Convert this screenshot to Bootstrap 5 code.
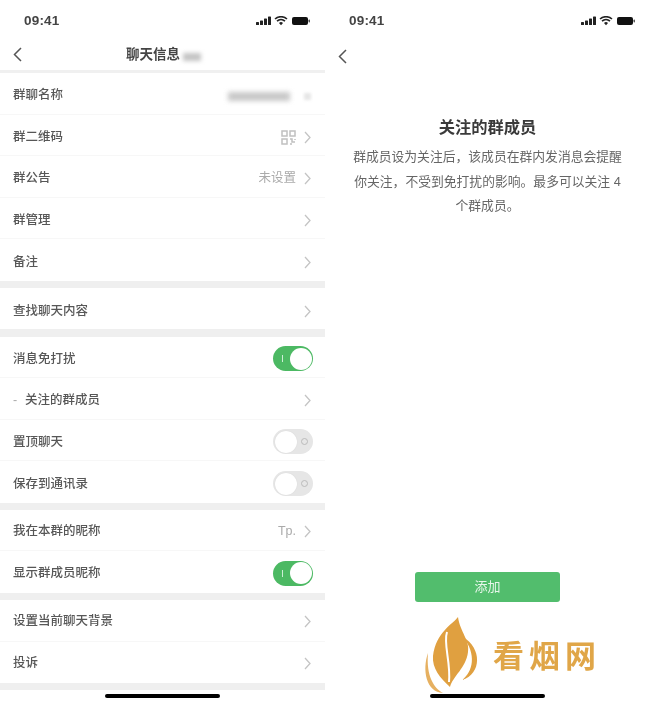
<!DOCTYPE html>
<html lang="zh-CN">
  <head>
    <meta charset="UTF-8" />
    <meta name="viewport" content="width=device-width, initial-scale=1" />
    <title>聊天信息</title>
    <link
      href="https://cdn.jsdelivr.net/npm/bootstrap@5.3.0/dist/css/bootstrap.min.css"
      rel="stylesheet"
    />
    <style>
      html, body { height: 704px; overflow: hidden; background: #fff; }
      body { font-family: "Liberation Sans", "Noto Sans CJK SC", sans-serif; color: #555; }
      .phones { width: 650px; height: 704px; filter: blur(0.7px); }
      .phone { width: 325px; height: 704px; }

      .status-row { height: 40px; padding: 13px 14px 0 24px; }
      .status-icons { margin-top: 3px; }
      .clock { font-size: 13.5px; font-weight: 700; color: #444; line-height: 16px; letter-spacing: 0.2px; }
      .top-row { height: 32px; padding: 0 13px; }
      .page-name { font-size: 13.5px; font-weight: 700; color: #444; margin-left: 103px; }
      .name-mask { width: 18px; height: 8px; margin: 4px 0 0 3px; background: #c4c4c4; filter: blur(2px); }
      .top-rule { height: 3px; background: #f0f0f0; }

      .info-list { font-size: 12.5px; font-weight: 500; border-radius: 0; }
      .info-item { height: 41.5px; padding: 4px 14px 0 13px; border-color: #f7f7f7; color: #575757; background: transparent; }
      .info-high .info-item { padding-top: 5px; }
      .info-low .info-item { padding-top: 2px; }
      .info-value { color: #aaa; margin-right: 8px; font-weight: 400; }
      .info-dash { color: #aaa; width: 12px; }
      .gap-band { height: 7.5px; background: #efefef; }
      .name-blur { width: 62px; height: 9px; background: #c8c8c8; filter: blur(2.5px); margin: 2px 14px 0 0; }
      .dot-blur { width: 7px; height: 7px; background: #e6e6e6; filter: blur(1.5px); margin-top: 2px; }

      .sw { width: 40px; height: 25px; border-radius: 13px; padding: 1.5px; margin-right: -2px; }
      .sw-on { background: #4cb963; }
      .sw-off { background: #e6e6e6; }
      .knob { width: 22px; height: 22px; border-radius: 50%; background: #fff; }
      .sw-off .knob { box-shadow: 0 0 1px #ccc; }
      .on-mark { width: 1px; height: 7px; background: #cdeed6; margin-left: 7px; }
      .off-mark { width: 7px; height: 7px; border: 1px solid #bbb; border-radius: 50%; margin-right: 4px; }

      .home-row { height: 14px; }
      .home-bar { width: 115px; height: 3.5px; border-radius: 2px; background: #000; margin-top: 4px; }

      .intro-title { font-size: 16.3px; font-weight: 700; color: #3a3a3a; margin: 43px 0 0; line-height: 24px; }
      .intro-text { font-size: 12.8px; line-height: 24.5px; color: #666; width: 272px; margin: 6px auto 0; }
      .add-btn { width: 145px; height: 30px; margin: 0 auto 88px; padding: 0; font-size: 13px; border-radius: 3px; background: #52bd6d; border: 0; color: #e6f6ea; }

      .mark-logo { left: 95px; top: 612px; }
      .mark-name { left: 168px; top: 637px; font-size: 31px; line-height: 40px; font-weight: 700; color: #e0a648; letter-spacing: 5px; }
    </style>
  </head>
  <body>
    <svg width="0" height="0" class="position-absolute">
      <defs>
        <g id="status-icons">
          <!-- signal -->
          <rect x="0" y="6" width="3" height="3" rx="0.6" fill="#222" />
          <rect x="4" y="4.5" width="3" height="4.5" rx="0.6" fill="#222" />
          <rect x="8" y="2.5" width="3" height="6.5" rx="0.6" fill="#222" />
          <rect x="12" y="0.5" width="3" height="8.5" rx="0.6" fill="#222" />
          <!-- wifi -->
          <path d="M19 3 a9 9 0 0 1 12 0 M21 5.2 a6 6 0 0 1 8 0" fill="none" stroke="#222" stroke-width="1.6" />
          <path d="M23 7 a3 3 0 0 1 4 0 L25 9.2 Z" fill="#222" />
          <!-- battery -->
          <rect x="36" y="1" width="16" height="8" rx="2" fill="#111" />
          <rect x="52.5" y="3.5" width="1.5" height="3" rx="0.7" fill="#555" />
        </g>
        <path id="chev-left" d="M8 1 L1.5 7.5 L8 14" fill="none" stroke="#555" stroke-width="1.5" />
        <path id="chev-right" d="M1 1 L6 6.5 L1 12" fill="none" stroke="#c4c4c4" stroke-width="1.3" />
      </defs>
    </svg>

    <div class="phones d-flex">
      <!-- Left: group info -->
      <div class="phone d-flex flex-column">
        <div class="status-row d-flex justify-content-between align-items-start">
          <span class="clock">09:41</span>
          <svg width="55" height="10" class="status-icons"><use href="#status-icons" /></svg>
        </div>
        <div class="top-row d-flex align-items-center">
          <svg width="10" height="15"><use href="#chev-left" /></svg>
          <span class="page-name">聊天信息</span>
          <span class="name-mask"></span>
        </div>
        <div class="top-rule"></div>

        <div class="list-group list-group-flush info-list info-high">
          <div class="list-group-item info-item d-flex align-items-center justify-content-between">
            <span>群聊名称</span>
            <span class="d-flex align-items-center"><span class="name-blur"></span><span class="dot-blur"></span></span>
          </div>
          <div class="list-group-item info-item d-flex align-items-center justify-content-between">
            <span>群二维码</span>
            <span class="d-flex align-items-center">
              <svg width="15" height="15" class="info-value">
                <g fill="none" stroke="#c0c0c0" stroke-width="1.5">
                  <rect x="1" y="1" width="5" height="5" />
                  <rect x="9" y="1" width="5" height="5" />
                  <rect x="1" y="9" width="5" height="5" />
                  <path d="M9 9 h2 v3 h3 M14 9 v1 M9 14 h2" />
                </g>
              </svg>
              <svg width="7" height="13"><use href="#chev-right" /></svg>
            </span>
          </div>
          <div class="list-group-item info-item d-flex align-items-center justify-content-between">
            <span>群公告</span>
            <span class="d-flex align-items-center"><span class="info-value">未设置</span><svg width="7" height="13"><use href="#chev-right" /></svg></span>
          </div>
          <div class="list-group-item info-item d-flex align-items-center justify-content-between">
            <span>群管理</span>
            <svg width="7" height="13"><use href="#chev-right" /></svg>
          </div>
          <div class="list-group-item info-item d-flex align-items-center justify-content-between border-0">
            <span>备注</span>
            <svg width="7" height="13"><use href="#chev-right" /></svg>
          </div>
        </div>
        <div class="gap-band"></div>

        <div class="list-group list-group-flush info-list info-high">
          <div class="list-group-item info-item d-flex align-items-center justify-content-between border-0">
            <span>查找聊天内容</span>
            <svg width="7" height="13"><use href="#chev-right" /></svg>
          </div>
        </div>
        <div class="gap-band"></div>

        <div class="list-group list-group-flush info-list">
          <div class="list-group-item info-item d-flex align-items-center justify-content-between">
            <span>消息免打扰</span>
            <span class="sw sw-on d-flex align-items-center justify-content-between"><span class="on-mark"></span><span class="knob"></span></span>
          </div>
          <div class="list-group-item info-item d-flex align-items-center justify-content-between">
            <span class="d-flex"><span class="info-dash">-</span>关注的群成员</span>
            <svg width="7" height="13"><use href="#chev-right" /></svg>
          </div>
          <div class="list-group-item info-item d-flex align-items-center justify-content-between">
            <span>置顶聊天</span>
            <span class="sw sw-off d-flex align-items-center justify-content-between"><span class="knob"></span><span class="off-mark"></span></span>
          </div>
          <div class="list-group-item info-item d-flex align-items-center justify-content-between border-0">
            <span>保存到通讯录</span>
            <span class="sw sw-off d-flex align-items-center justify-content-between"><span class="knob"></span><span class="off-mark"></span></span>
          </div>
        </div>
        <div class="gap-band"></div>

        <div class="list-group list-group-flush info-list info-low">
          <div class="list-group-item info-item d-flex align-items-center justify-content-between">
            <span>我在本群的昵称</span>
            <span class="d-flex align-items-center"><span class="info-value">Tp.</span><svg width="7" height="13"><use href="#chev-right" /></svg></span>
          </div>
          <div class="list-group-item info-item d-flex align-items-center justify-content-between border-0">
            <span>显示群成员昵称</span>
            <span class="sw sw-on d-flex align-items-center justify-content-between"><span class="on-mark"></span><span class="knob"></span></span>
          </div>
        </div>
        <div class="gap-band"></div>

        <div class="list-group list-group-flush info-list info-low">
          <div class="list-group-item info-item d-flex align-items-center justify-content-between">
            <span>设置当前聊天背景</span>
            <svg width="7" height="13"><use href="#chev-right" /></svg>
          </div>
          <div class="list-group-item info-item d-flex align-items-center justify-content-between border-0">
            <span>投诉</span>
            <svg width="7" height="13"><use href="#chev-right" /></svg>
          </div>
        </div>
        <div class="gap-band"></div>

        <div class="home-row d-flex justify-content-center"><div class="home-bar"></div></div>
      </div>

      <!-- Right: followed members -->
      <div class="phone d-flex flex-column position-relative">
        <div class="status-row d-flex justify-content-between align-items-start">
          <span class="clock">09:41</span>
          <svg width="55" height="10" class="status-icons"><use href="#status-icons" /></svg>
        </div>
        <div class="top-row d-flex align-items-center">
          <svg width="10" height="15"><use href="#chev-left" /></svg>
        </div>
        <div class="text-center">
          <h1 class="intro-title">关注的群成员</h1>
          <p class="intro-text">群成员设为关注后，该成员在群内发消息会提醒你关注，不受到免打扰的影响。最多可以关注 4 个群成员。</p>
        </div>
        <button type="button" class="btn add-btn mt-auto">添加</button>
        <div class="home-row d-flex justify-content-center"><div class="home-bar"></div></div>

        <!-- watermark -->
        <svg class="mark-logo position-absolute" width="65" height="88" viewBox="0 0 65 88">
          <path d="M38 5 C33 12 16 20 13 44 C12 56 20 66 30 75 C33 64 46 56 48 40 C50 28 40 20 38 5 Z" fill="#e0a040" />
          <path d="M27 20 C23 32 31 50 29 70" fill="none" stroke="#fff" stroke-width="2" />
          <path d="M8 41 C2 58 6 80 23 81 C14 76 6 64 8 41 Z" fill="#e6b060" />
          <path d="M43 25 C62 36 62 62 42 68 C53 60 57 42 43 25 Z" fill="#e0a040" />
        </svg>
        <span class="mark-name position-absolute">看烟网</span>
      </div>
    </div>

    <script src="https://cdn.jsdelivr.net/npm/bootstrap@5.3.0/dist/js/bootstrap.bundle.min.js"></script>
  </body>
</html>
